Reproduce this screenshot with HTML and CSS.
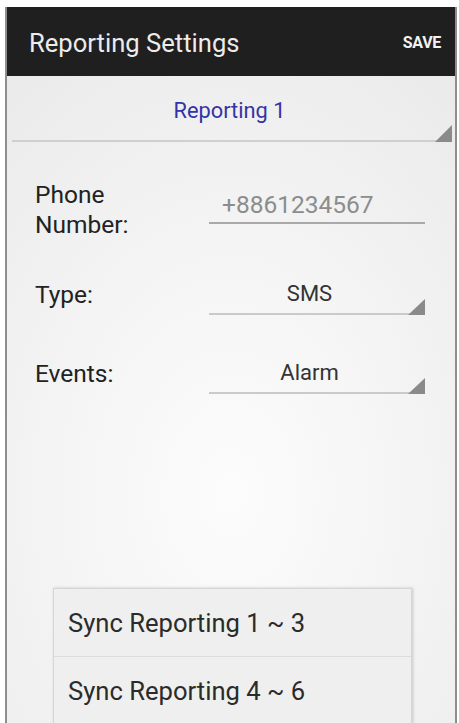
FILE: index.html
```html
<!DOCTYPE html>
<html>
<head>
<meta charset="utf-8">
<link rel="stylesheet" href="styles.css">
</head>
<body>
<div class="screen">
  <header class="appbar">
    <span class="title">Reporting Settings</span>
    <span class="action">SAVE</span>
  </header>
  <main class="content">
    <div class="top-spinner">
      <span class="top-spinner-text">Reporting 1</span>
      <svg class="tri tri-top" width="17" height="17" viewBox="0 0 17 17"><polygon points="17,0 17,17 0,17" fill="#8a8a8a"/></svg>
    </div>
    <div class="row row-phone">
      <div class="label">Phone<br>Number:</div>
      <div class="edit">+8861234567</div>
    </div>
    <div class="row row-type">
      <div class="label">Type:</div>
      <div class="spinner">SMS
        <svg class="tri tri-field" width="17" height="16" viewBox="0 0 17 16"><polygon points="17,0 17,16 0,16" fill="#8a8a8a"/></svg>
      </div>
    </div>
    <div class="row row-events">
      <div class="label">Events:</div>
      <div class="spinner">Alarm
        <svg class="tri tri-field" width="17" height="16" viewBox="0 0 17 16"><polygon points="17,0 17,16 0,16" fill="#8a8a8a"/></svg>
      </div>
    </div>
  </main>
  <div class="menu">
    <div class="menu-item">Sync Reporting 1 ~ 3</div>
    <div class="menu-item">Sync Reporting 4 ~ 6</div>
  </div>
</div>
</body>
</html>
```

FILE: styles.css
```css
html, body {
  margin: 0;
  padding: 0;
  background: #ffffff;
  font-family: Roboto, "Liberation Sans", sans-serif;
}

.screen {
  position: relative;
  margin: 7px 0 0 5px;
  width: 452px;
  height: 716px;
  box-sizing: border-box;
  border-left: 2px solid #8e8e8e;
  border-right: 2px solid #8e8e8e;
  overflow: hidden;
  display: flex;
  flex-direction: column;
  background: radial-gradient(ellipse 80% 70% at 50% 68%, #fcfcfc 0%, #f5f5f5 45%, #ebebeb 100%);
}

.appbar {
  height: 69px;
  flex: none;
  background: #1f1f1f;
  display: flex;
  align-items: center;
  justify-content: space-between;
  padding: 2px 16px 0 24px;
  box-sizing: border-box;
  margin-left: -2px;
  margin-right: -2px;
}

.title {
  color: #ececec;
  font-size: 25.6px;
}

.action {
  color: #f2f2f2;
  font-size: 16px;
  font-weight: bold;
  letter-spacing: -0.3px;
}

.content {
  flex: 1;
  display: flex;
  flex-direction: column;
}

.top-spinner {
  position: relative;
  height: 66px;
  box-sizing: border-box;
  margin: 0 4px 0 5px;
  border-bottom: 2px solid #cfcfcf;
  padding-bottom: 16px;
  display: flex;
  align-items: flex-end;
  justify-content: center;
}

.top-spinner-text {
  color: #3434a6;
  font-size: 21.8px;
  line-height: 26px;
  margin-right: 4px;
}

.tri {
  position: absolute;
  display: block;
}

.tri-top {
  right: -1px;
  bottom: -2px;
}

.row {
  display: flex;
  align-items: flex-start;
  padding-left: 28px;
}

.label {
  width: 174px;
  flex: none;
  color: #222222;
  font-size: 24.5px;
  line-height: 30px;
}

.row-phone {
  margin-top: 38px;
}

.row-type {
  margin-top: 39px;
}

.row-events {
  margin-top: 43px;
}

.row-type .label,
.row-events .label {
  margin-top: 1px;
}

.edit {
  width: 216px;
  margin-top: 10px;
  box-sizing: border-box;
  padding-left: 13px;
  padding-bottom: 2px;
  border-bottom: 2px solid #a9a9a9;
  color: #8c8c8c;
  font-size: 24.5px;
  line-height: 30px;
}

.spinner {
  position: relative;
  width: 216px;
  box-sizing: border-box;
  padding-right: 15px;
  padding-bottom: 4px;
  border-bottom: 2px solid #cacaca;
  text-align: center;
  color: #333333;
  font-size: 22px;
  line-height: 30px;
}

.tri-field {
  right: 0;
  bottom: -2px;
}

.menu {
  position: absolute;
  left: 46px;
  top: 581px;
  width: 357px;
  background: #efefef;
  border: 1px solid #d6d6d6;
  border-bottom: none;
  box-shadow: 1px 0 3px rgba(0, 0, 0, 0.18);
}

.menu-item {
  height: 67px;
  line-height: 68px;
  padding-left: 14px;
  font-size: 25.6px;
  color: #2b2b2b;
}

.menu-item + .menu-item {
  border-top: 1px solid #dcdcdc;
}
```
